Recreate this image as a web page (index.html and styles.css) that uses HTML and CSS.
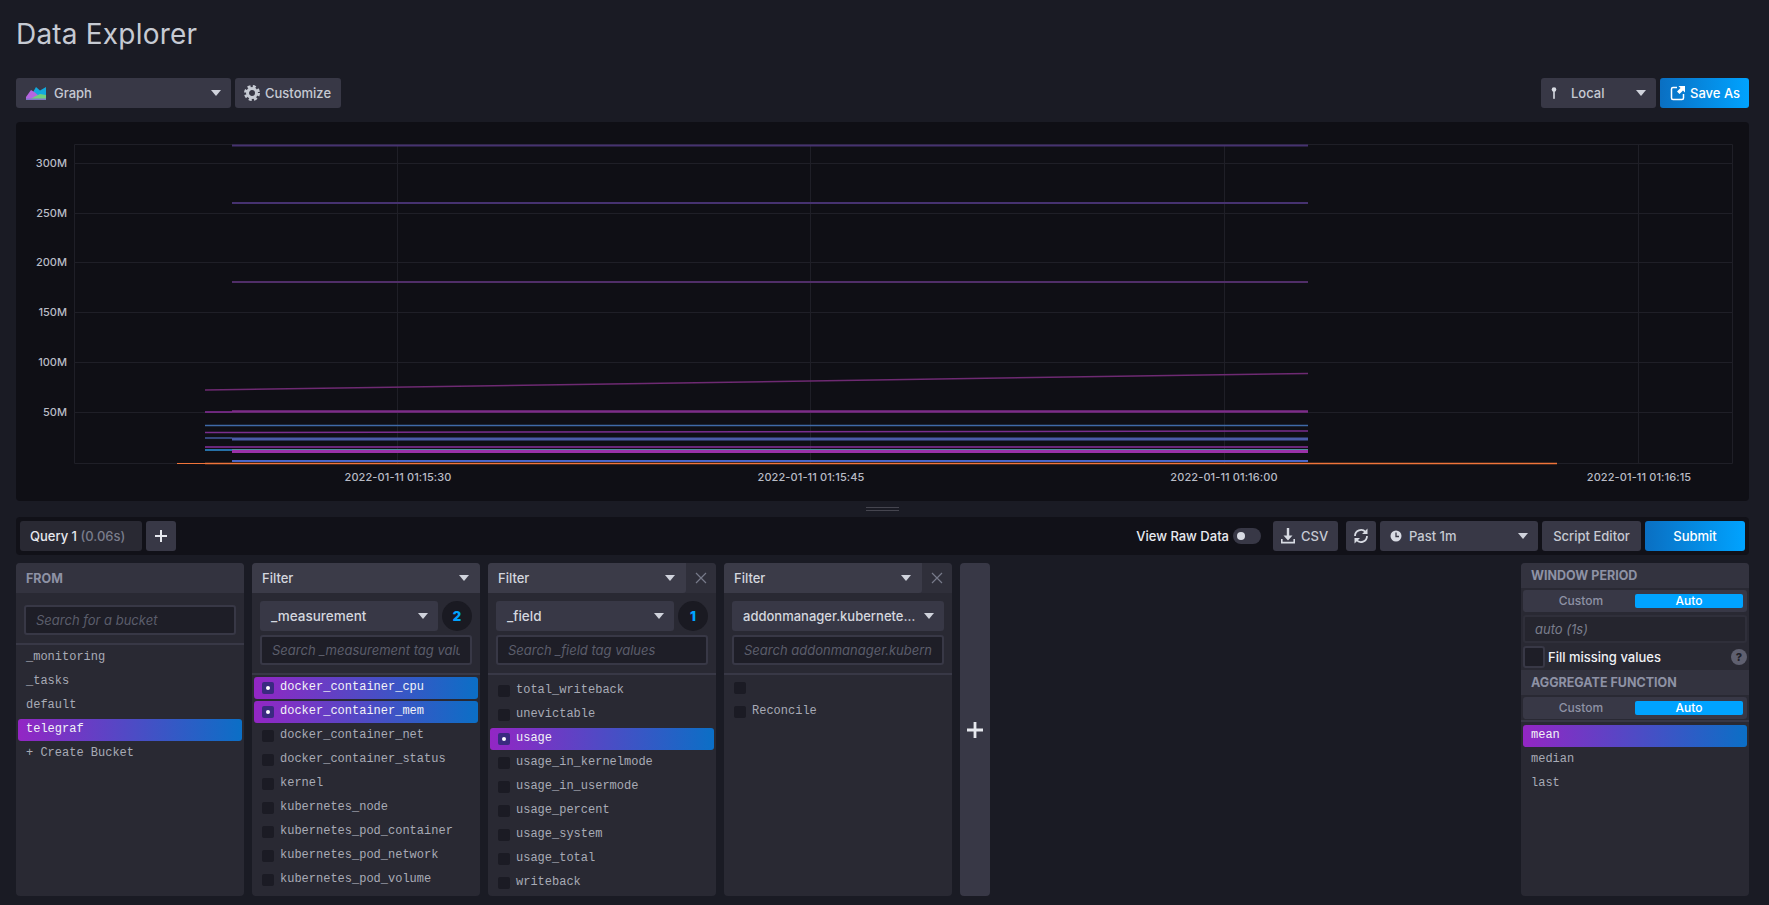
FILE: index.html
```html
<!DOCTYPE html>
<html lang="en">
<head>
<meta charset="utf-8">
<title>Data Explorer</title>
<link rel="stylesheet" href="styles.css">
</head>
<body>
<div class="page">
  <h1 class="title">Data Explorer</h1>
  <div class="toolbar">
    <div class="group">
      <div class="btn drop graph-drop">
        <svg class="ic-graph" viewBox="0 0 20 14"><path fill="#12a8dc" d="M6 8l4-7 4 3.500L20 1v9H6z"/><path fill="#b565e0" d="M0 11l5-7 4 2.500L13 10v4H0z"/><path fill="#6fcf7f" d="M3 14l5-3 6-3 6 1v5z"/><path fill="#7f78c8" d="M0 12.500h20V14H0z"/></svg>
        <span class="lbl">Graph</span><i class="caret"></i>
      </div>
      <div class="btn customize">
        <svg class="ic16" viewBox="0 0 16 16"><g fill="none" stroke="#c6cad3"><circle cx="8" cy="8" r="4.500" stroke-width="3"/><circle cx="8" cy="8" r="6.500" stroke-width="3" stroke-dasharray="2.900 2.205"/></g></svg>
        <span class="lbl">Customize</span>
      </div>
    </div>
    <div class="group">
      <div class="btn drop local-drop">
        <svg class="ic-pin" viewBox="0 0 6 12"><circle cx="3" cy="2.500" r="2.300" fill="#d8dbe3"/><rect x="2.200" y="3" width="1.600" height="9" rx=".8" fill="#d8dbe3"/></svg>
        <span class="lbl">Local</span><i class="caret"></i>
      </div>
      <div class="btn primary save-as">
        <svg class="ic16" viewBox="0 0 16 16"><path fill="none" stroke="#fff" stroke-width="1.500" d="M7 2.500H3a1.500 1.500 0 0 0-1.500 1.500v9A1.500 1.500 0 0 0 3 14.500h9a1.500 1.500 0 0 0 1.500-1.500V9"/><path fill="#fff" d="M8.500 1H15v6.500l-2-2-3.500 3.500L7 6.500l3.500-3.500z"/></svg>
        <span class="lbl">Save As</span>
      </div>
    </div>
  </div>

  <div class="chart">
    <svg class="chart-svg" viewBox="16 122 1733 379" width="1733" height="379">
      <g class="grid">
        <path d="M74.500 144.500H1732.500V463.500H74.500Z"/>
        <path d="M74.500 163.500H1732.500M74.500 213.500H1732.500M74.500 262.500H1732.500M74.500 312.500H1732.500M74.500 362.500H1732.500M74.500 412.500H1732.500"/>
        <path d="M397.500 144V464M810.500 144V464M1224.500 144V464M1638.500 144V464"/>
      </g>
      <g class="series" fill="none">
        <path stroke="#463270" stroke-width="2" d="M232 145.500H1308"/>
        <path stroke="#463270" stroke-width="2" d="M232 203H1308"/>
        <path stroke="#502e68" stroke-width="2" d="M232 282H1308"/>
        <path stroke="#6e2a72" stroke-width="1.500" d="M205 390L1308 373.500"/>
        <path stroke="#8a2f9c" stroke-width="1.500" d="M205 412H232"/>
        <path stroke="#7d2d88" stroke-width="2.500" d="M232 411.500H1308"/>
        <path stroke="#3f6aa8" stroke-width="1.500" d="M205 425.500H1308"/>
        <path stroke="#7a2e8e" stroke-width="1.500" d="M205 432.500L1308 431"/>
        <path stroke="#435a9e" stroke-width="1.500" d="M205 438H232"/>
        <path stroke="#4a5ba8" stroke-width="3" d="M232 439H1308"/>
        <path stroke="#8a2f9c" stroke-width="1.500" d="M205 447H1308"/>
        <path stroke="#2f92d8" stroke-width="1.500" d="M205 450H232"/>
        <path stroke="#4d8f9a" stroke-width="1" d="M232 449.500H1308"/>
        <path stroke="#9a32a8" stroke-width="3" d="M232 451.500H1308"/>
        <path stroke="#4a66c8" stroke-width="2" d="M232 461H1308"/>
        <path stroke="#f0743a" stroke-width="1" d="M177 463.500H205"/>
        <path stroke="#f0743a" stroke-width="1.500" d="M205 463.500H1557"/>
      </g>
      <g class="ylabels">
        <text x="67" y="167">300M</text>
        <text x="67" y="217">250M</text>
        <text x="67" y="266">200M</text>
        <text x="67" y="316">150M</text>
        <text x="67" y="366">100M</text>
        <text x="67" y="416">50M</text>
      </g>
      <g class="xlabels">
        <text x="398" y="481">2022-01-11 01:15:30</text>
        <text x="811" y="481">2022-01-11 01:15:45</text>
        <text x="1224" y="481">2022-01-11 01:16:00</text>
        <text x="1639" y="481">2022-01-11 01:16:15</text>
      </g>
    </svg>
  </div>

  <div class="resizer"><i></i><i></i></div>

  <div class="querybar">
    <div class="group">
      <div class="btn tab">Query 1&nbsp;<span class="dim">(0.06s)</span></div>
      <div class="btn square"><svg class="ic12" viewBox="0 0 12 12"><path fill="#e6e8ee" d="M5 0h2v5h5v2H7v5H5V7H0V5h5z"/></svg></div>
    </div>
    <div class="group">
      <span class="raw-label">View Raw Data</span>
      <span class="toggle"><i></i></span>
      <div class="btn csv">
        <svg class="ic16" viewBox="0 0 16 16"><path fill="#d8dbe3" d="M6.800 0h2.400v7.500H12.500L8 12.500 3.500 7.500H6.800zM1 11h1.600v2.800h10.800V11H15v4.500H1z"/></svg>
        <span class="lbl">CSV</span>
      </div>
      <div class="btn square refresh">
        <svg class="ic16" viewBox="0 0 16 16"><g fill="none" stroke="#d8dbe3" stroke-width="1.800"><path d="M2 8a6 6 0 0 1 10.500-4"/><path d="M14 8a6 6 0 0 1-10.500 4"/></g><path fill="#d8dbe3" d="M14.500 .5v5.500H9zM1.500 15.500V10H7z"/></svg>
      </div>
      <div class="btn drop past">
        <svg class="ic12" viewBox="0 0 12 12"><circle cx="6" cy="6" r="5.500" fill="#d8dbe3"/><path d="M6 2.500V6.500H9" fill="none" stroke="#383846" stroke-width="1.300"/></svg>
        <span class="lbl">Past 1m</span><i class="caret"></i>
      </div>
      <div class="btn script">Script Editor</div>
      <div class="btn primary submit">Submit</div>
    </div>
  </div>

  <div class="builder">
    <section class="card">
      <header class="card-head from-head">FROM</header>
      <div class="from-search"><div class="search">Search for a bucket</div></div>
      <div class="list">
        <div class="row">_monitoring</div>
        <div class="row">_tasks</div>
        <div class="row">default</div>
        <div class="row on">telegraf</div>
        <div class="row">+ Create Bucket</div>
      </div>
    </section>

    <section class="card">
      <header class="card-head"><span>Filter</span><i class="caret"></i></header>
      <div class="controls">
        <div class="ctl-row">
          <div class="btn drop key"><span class="key-text">_measurement</span><i class="caret"></i></div>
          <span class="badge">2</span>
        </div>
        <div class="search"><span class="clip">Search _measurement tag values</span></div>
      </div>
      <div class="list">
        <div class="row on"><i class="cb"></i>docker_container_cpu</div>
        <div class="row on"><i class="cb"></i>docker_container_mem</div>
        <div class="row"><i class="cb"></i>docker_container_net</div>
        <div class="row"><i class="cb"></i>docker_container_status</div>
        <div class="row"><i class="cb"></i>kernel</div>
        <div class="row"><i class="cb"></i>kubernetes_node</div>
        <div class="row"><i class="cb"></i>kubernetes_pod_container</div>
        <div class="row"><i class="cb"></i>kubernetes_pod_network</div>
        <div class="row"><i class="cb"></i>kubernetes_pod_volume</div>
      </div>
    </section>

    <section class="card">
      <div class="head-split">
        <header class="card-head"><span>Filter</span><i class="caret"></i></header>
        <div class="close"><svg class="ic12" viewBox="0 0 12 12"><path d="M1 1l10 10M11 1L1 11" stroke="#777a8a" stroke-width="1.200" fill="none"/></svg></div>
      </div>
      <div class="controls">
        <div class="ctl-row">
          <div class="btn drop key"><span class="key-text">_field</span><i class="caret"></i></div>
          <span class="badge">1</span>
        </div>
        <div class="search"><span class="clip">Search _field tag values</span></div>
      </div>
      <div class="list scrolled">
        <div class="row"><i class="cb"></i>total_writeback</div>
        <div class="row"><i class="cb"></i>unevictable</div>
        <div class="row on"><i class="cb"></i>usage</div>
        <div class="row"><i class="cb"></i>usage_in_kernelmode</div>
        <div class="row"><i class="cb"></i>usage_in_usermode</div>
        <div class="row"><i class="cb"></i>usage_percent</div>
        <div class="row"><i class="cb"></i>usage_system</div>
        <div class="row"><i class="cb"></i>usage_total</div>
        <div class="row"><i class="cb"></i>writeback</div>
      </div>
    </section>

    <section class="card">
      <div class="head-split">
        <header class="card-head"><span>Filter</span><i class="caret"></i></header>
        <div class="close"><svg class="ic12" viewBox="0 0 12 12"><path d="M1 1l10 10M11 1L1 11" stroke="#777a8a" stroke-width="1.200" fill="none"/></svg></div>
      </div>
      <div class="controls">
        <div class="ctl-row">
          <div class="btn drop key"><span class="key-text ellipsis">addonmanager.kubernetes.io/mode</span><i class="caret"></i></div>
        </div>
        <div class="search"><span class="clip">Search addonmanager.kubernetes.io/mode tag values</span></div>
      </div>
      <div class="list">
        <div class="row"><i class="cb"></i></div>
        <div class="row"><i class="cb"></i>Reconcile</div>
      </div>
    </section>

    <div class="add-card"><svg class="ic16" viewBox="0 0 16 16"><path fill="#e6e8ee" d="M6.600 0h2.800v6.600H16v2.800H9.400V16H6.600V9.400H0V6.600h6.600z"/></svg></div>

    <section class="card side">
      <header class="side-head">WINDOW PERIOD</header>
      <div class="seg"><span>Custom</span><span class="seg-on">Auto</span></div>
      <div class="auto-input">auto (1s)</div>
      <div class="fill-row">
        <i class="fill-cb"></i><span class="fill-label">Fill missing values</span><span class="help">?</span>
      </div>
      <header class="side-head">AGGREGATE FUNCTION</header>
      <div class="seg"><span>Custom</span><span class="seg-on">Auto</span></div>
      <div class="list fn-list">
        <div class="row on">mean</div>
        <div class="row">median</div>
        <div class="row">last</div>
      </div>
    </section>
  </div>
</div>
</body>
</html>
```
FILE: styles.css
```css
* { box-sizing: border-box; }
html, body { margin: 0; height: 100%; overflow: hidden; }
body { background: #1a1b24; color: #c6cad3; font-family: Inter, Roboto, "Liberation Sans", sans-serif; font-size: 13px; }
i { display: block; font-style: normal; }
svg { display: block; flex: none; }

.page { padding: 0 20px 0 16px; height: 905px; }
.title { margin: 0; height: 78px; padding-top: 17px; font-size: 28px; line-height: 34px; font-weight: 400; letter-spacing: .2px; color: #c6cad3; }

.toolbar { display: flex; justify-content: space-between; height: 30px; margin-bottom: 14px; }
.group { display: flex; align-items: center; gap: 4px; }

.btn { display: flex; align-items: center; height: 30px; border-radius: 3px; background: #383846; color: #c6cad3; font-weight: 500; white-space: nowrap; }
.drop { position: relative; }
.caret { width: 0; height: 0; border-left: 5.500px solid transparent; border-right: 5.500px solid transparent; border-top: 6px solid #d0d3dc; flex: none; }
.drop .caret { margin-left: auto; }
.primary { background: linear-gradient(to right, #0a6fc2, #00a3ff); color: #fff; }
.ic16 { width: 16px; height: 16px; }
.ic12 { width: 12px; height: 12px; }

.graph-drop { width: 215px; padding: 0 10px 0 10px; }
.ic-graph { width: 20px; height: 14px; margin-right: 8px; }
.customize { width: 106px; padding-left: 9px; gap: 5px; }
.local-drop { width: 115px; padding: 0 10px 0 10px; }
.ic-pin { width: 6px; height: 12px; margin-right: 14px; }
.save-as { width: 89px; padding-left: 10px; gap: 4px; }

.chart { height: 379px; background: #0f0f15; border-radius: 4px; }
.chart-svg { overflow: hidden; }
.grid path { fill: none; stroke: #1f1f27; stroke-width: 1; }
.ylabels text { font-family: Inter, Roboto, sans-serif; font-size: 11px; font-weight: 500; fill: #b9bcc6; text-anchor: end; }
.xlabels text { font-family: Inter, Roboto, sans-serif; font-size: 11px; font-weight: 500; letter-spacing: .1px; fill: #b9bcc6; text-anchor: middle; }

.resizer { height: 16px; display: flex; flex-direction: column; align-items: center; justify-content: center; gap: 2px; }
.resizer i { width: 33px; height: 1px; background: #45454f; }

.querybar { height: 38px; background: #111118; border-radius: 4px; padding: 4px; display: flex; justify-content: space-between; margin-bottom: 8px; }
.tab { width: 122px; padding-left: 10px; background: #292933; color: #e6e8ee; }
.dim { color: #7a7d8c; }
.square { width: 30px; justify-content: center; }
.raw-label { color: #e8eaf0; font-weight: 500; }
.toggle { width: 28px; height: 16px; border-radius: 8px; background: #383846; display: flex; align-items: center; padding-left: 4px; margin-right: 8px; }
.toggle i { width: 8px; height: 8px; border-radius: 50%; background: #d8dbe3; }
.csv { width: 65px; padding-left: 7px; gap: 5px; margin-right: 4px; }
.past { width: 158px; padding: 0 10px 0 10px; gap: 7px; }
.script { width: 99px; justify-content: center; }
.submit { width: 100px; justify-content: center; }

.builder { display: flex; gap: 8px; height: 333px; }
.card { width: 228px; background: #292933; border-radius: 4px; overflow: hidden; display: flex; flex-direction: column; }
.card-head { height: 30px; padding: 0 11px 0 10px; background: #3b3b48; color: #d4d7df; font-weight: 500; display: flex; align-items: center; justify-content: space-between; flex: none; }
.from-head { background: #33333f; color: #8e92a5; font-weight: 700; font-size: 12.500px; }
.head-split { display: flex; background: #2f2f3a; height: 30px; flex: none; }
.head-split .card-head { width: 198px; border-bottom-right-radius: 3px; }
.close { flex: 1; display: flex; align-items: center; justify-content: center; }

.search { height: 30px; border: 2px solid #383846; border-radius: 3px; background: #1e1e27; color: #5b5d6b; font-style: italic; font-size: 13px; display: flex; align-items: center; padding: 0 10px; overflow: hidden; white-space: nowrap; }
.clip { display: block; overflow: hidden; width: 100%; }
.from-search { padding: 12px 8px 8px; border-bottom: 2px solid #383846; flex: none; }

.controls { padding: 8px; display: flex; flex-direction: column; gap: 4px; border-bottom: 2px solid #383846; flex: none; }
.ctl-row { display: flex; gap: 4px; }
.key { flex: 1; min-width: 0; padding: 0 10px 0 11px; color: #d4d7df; font-size: 13.500px; }
.key-text { min-width: 0; }
.ellipsis { overflow: hidden; text-overflow: ellipsis; white-space: nowrap; flex: 1; padding-right: 2px; font-size: 13px; }
.badge { width: 30px; height: 30px; border-radius: 50%; background: #1a1a22; color: #00a3ff; font-weight: 900; font-size: 13px; display: flex; align-items: center; justify-content: center; flex: none; }

.list { padding: 2px 2px 0; flex: 1; display: flex; flex-direction: column; gap: 2px; font-family: "Liberation Mono", "DejaVu Sans Mono", monospace; font-size: 12px; color: #a8abb6; }
.list.scrolled { padding-top: 5px; }
.row { height: 22px; flex: none; display: flex; align-items: center; padding: 0 0 2px 8px; border-radius: 3px; white-space: nowrap; }
.row.on { background: linear-gradient(to right, #9326c4, #0b6fc6); color: #f2f3f7; }
.cb { width: 12px; height: 12px; border-radius: 2px; background: #1b1b24; margin: 2px 6px 0 0; flex: none; display: flex; align-items: center; justify-content: center; }
.row.on .cb { background: #3a2a80; }
.row.on .cb::after { content: ""; width: 4px; height: 4px; border-radius: 50%; background: #fff; }

.add-card { width: 30px; background: #383846; border-radius: 4px; display: flex; align-items: center; justify-content: center; }

.side { margin-left: auto; }
.side-head { height: 25px; flex: none; background: #33333f; color: #8e92a5; font-weight: 700; font-size: 12.500px; display: flex; align-items: center; padding-left: 10px; }
.seg { height: 22px; flex: none; margin: 2px 2px 0; background: #383846; border-radius: 3px; display: flex; align-items: center; padding: 0 4px; color: #8e92a5; font-size: 12px; font-weight: 500; }
.seg span { flex: 1; text-align: center; height: 14px; line-height: 14px; border-radius: 2px; }
.seg span.seg-on { background: #00a3ff; color: #fff; }
.auto-input { height: 28px; flex: none; margin: 3px 2px 0; border: 2px solid #2f2f3a; border-radius: 3px; padding-left: 10px; display: flex; align-items: center; font-style: italic; color: #7a7d8c; background: #25252e; }
.fill-row { height: 22px; flex: none; margin: 3px 2px 2px; display: flex; align-items: center; }
.fill-cb { width: 22px; height: 22px; background: #1e1e27; border: 2px solid #383846; border-radius: 3px; margin-right: 3px; flex: none; }
.fill-label { color: #f0f1f5; font-weight: 500; flex: 1; }
.help { width: 16px; height: 16px; border-radius: 50%; background: #5f6070; color: #1e1e27; font-weight: 800; font-size: 11px; display: flex; align-items: center; justify-content: center; }
.fn-list { margin-top: 1px; border-top: 2px solid #383846; padding-top: 3px; }
```
